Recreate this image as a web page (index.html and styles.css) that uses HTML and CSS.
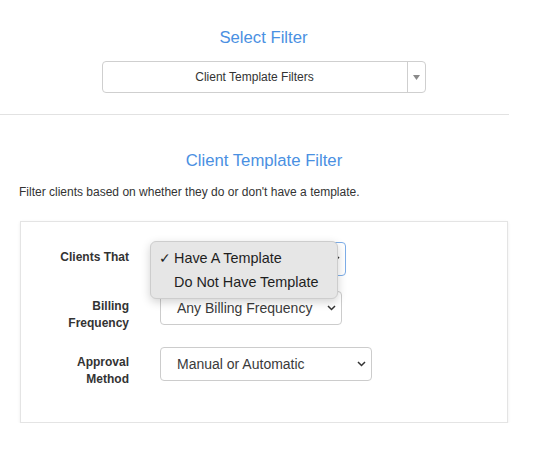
FILE: index.html
```html
<!DOCTYPE html>
<html>
<head>
<meta charset="utf-8">
<link rel="stylesheet" href="styles.css">
</head>
<body>
<div class="page">
  <section class="picker">
    <h2 class="title">Select Filter</h2>
    <div class="combo">
      <span class="combo-text">Client Template Filters</span>
      <span class="combo-arrow">
        <svg width="7" height="5" viewBox="0 0 7 5"><path d="M0 0H7L3.5 5Z" fill="#8a8a8a"/></svg>
      </span>
    </div>
  </section>
  <div class="divider"></div>
  <section class="filter">
    <h3 class="title">Client Template Filter</h3>
    <p class="desc">Filter clients based on whether they do or don't have a template.</p>
    <div class="panel">
      <div class="row">
        <label class="label">Clients That</label>
        <div class="field">
          <div class="select focused w-clients">
            <span class="under">Have A Template</span>
            <svg class="chev" width="9" height="6" viewBox="0 0 9 6"><path d="M1 1L4.5 4.5L8 1" fill="none" stroke="#333" stroke-width="1.5"/></svg>
          </div>
          <div class="menu">
            <div class="item"><span class="check">✓</span>Have A Template</div>
            <div class="item"><span class="check"></span>Do Not Have Template</div>
          </div>
        </div>
      </div>
      <div class="row">
        <label class="label">Billing Frequency</label>
        <div class="field">
          <div class="select w-billing">
            <span>Any Billing Frequency</span>
            <svg class="chev" width="9" height="6" viewBox="0 0 9 6"><path d="M1 1L4.5 4.5L8 1" fill="none" stroke="#333" stroke-width="1.5"/></svg>
          </div>
        </div>
      </div>
      <div class="row">
        <label class="label">Approval Method</label>
        <div class="field">
          <div class="select w-approval">
            <span>Manual or Automatic</span>
            <svg class="chev" width="9" height="6" viewBox="0 0 9 6"><path d="M1 1L4.5 4.5L8 1" fill="none" stroke="#333" stroke-width="1.5"/></svg>
          </div>
        </div>
      </div>
    </div>
  </section>
</div>
</body>
</html>
```

FILE: styles.css
```css
html, body {
  margin: 0;
  padding: 0;
  background: #fff;
}
body {
  font-family: "Liberation Sans", Arial, sans-serif;
  color: #333;
}
.page {
  width: 527px;
}
.picker {
  padding-top: 28px;
}
.title {
  margin: 0;
  font-size: 16.7px;
  line-height: 20px;
  font-weight: normal;
  color: #4a90e2;
  text-align: center;
}
.combo {
  margin: 13px auto 0;
  width: 324px;
  height: 32px;
  box-sizing: border-box;
  border: 1px solid #cfcfcf;
  border-radius: 4px;
  display: flex;
  align-items: stretch;
}
.combo-text {
  flex: 1;
  display: flex;
  align-items: center;
  justify-content: center;
  font-size: 12px;
  color: #333;
}
.combo-arrow {
  width: 17px;
  border-left: 1px solid #cfcfcf;
  display: flex;
  align-items: center;
  justify-content: center;
}
.divider {
  width: 509px;
  height: 1px;
  background: #e2e2e2;
  margin-top: 21px;
}
.filter {
  padding: 0 19px 0 20px;
}
.filter .title {
  margin-top: 36px;
}
.desc {
  margin: 13px 0 0 -1px;
  font-size: 12px;
  line-height: 16px;
  color: #333;
}
.panel {
  margin-top: 21px;
  border: 1px solid #e4e4e4;
  box-shadow: 0 1px 3px rgba(0, 0, 0, 0.08);
  padding: 20px 20px 19px;
}
.row {
  display: grid;
  grid-template-columns: 88px auto;
  column-gap: 31px;
  align-items: start;
  margin-bottom: 15px;
}
.label {
  padding-top: 7px;
  font-size: 12px;
  line-height: 17px;
  font-weight: bold;
  text-align: right;
  color: #333;
}
.field {
  position: relative;
  justify-self: start;
}
.select {
  height: 34px;
  box-sizing: border-box;
  border: 1px solid #cccccc;
  border-radius: 4px;
  padding: 0 5px 0 16px;
  display: flex;
  align-items: center;
  justify-content: space-between;
  font-size: 14px;
  color: #3a3a3a;
  background: #fff;
}
.select.focused {
  border-color: #7eaee8;
}
.under {
  visibility: hidden;
}
.w-clients { width: 186px; }
.w-billing { width: 182px; }
.w-approval { width: 212px; }
.menu {
  position: absolute;
  left: -10px;
  top: -1px;
  width: 188px;
  box-sizing: border-box;
  padding: 4px 0;
  background: #e6e6e6;
  border: 1px solid #cdcdcd;
  border-radius: 6px;
  box-shadow: 0 3px 10px rgba(0, 0, 0, 0.18);
  z-index: 2;
}
.item {
  height: 24px;
  line-height: 24px;
  padding-left: 8px;
  font-size: 14.4px;
  color: #1e1e1e;
  white-space: nowrap;
}
.check {
  display: inline-block;
  width: 15px;
}
```
